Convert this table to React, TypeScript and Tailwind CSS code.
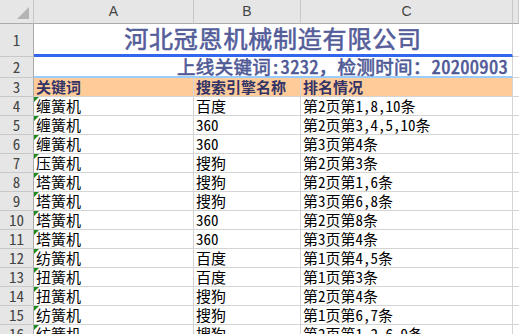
const FONT = '"Noto Sans Mono CJK SC", "Noto Sans CJK SC", sans-serif';

type Row = [string, string, string];

const ROWS: Row[] = [
  ['缠簧机', '百度', '第2页第1,8,10条'],
  ['缠簧机', '360', '第2页第3,4,5,10条'],
  ['缠簧机', '360', '第3页第4条'],
  ['压簧机', '搜狗', '第2页第3条'],
  ['塔簧机', '搜狗', '第2页第1,6条'],
  ['塔簧机', '搜狗', '第3页第6,8条'],
  ['塔簧机', '360', '第2页第8条'],
  ['塔簧机', '360', '第3页第4条'],
  ['纺簧机', '百度', '第1页第4,5条'],
  ['扭簧机', '百度', '第1页第3条'],
  ['扭簧机', '搜狗', '第2页第4条'],
  ['纺簧机', '搜狗', '第1页第6,7条'],
  ['纺簧机', '搜狗', '第2页第1,2,6,9条'],
];

function RowHead({ n, h }: { n: number; h: string }) {
  return (
    <div className={`${h} flex items-center justify-center border-r border-b border-r-[#ababab] border-b-[#c8c8c8] bg-[#e6e6e6] text-[15px] text-[#444]`}>
      {n}
    </div>
  );
}

function Cell({ children, flag }: { children: React.ReactNode; flag?: boolean }) {
  return (
    <div className="relative flex h-[19px] items-end overflow-visible whitespace-nowrap border-r border-b border-[#d4d4d4] pl-[2px] text-[15px] leading-[18px] text-black">
      {flag ? <span className="absolute left-0 top-0 h-0 w-0 border-t-[5px] border-r-[5px] border-t-[#1c8a1c] border-r-transparent" /> : null}
      {children}
    </div>
  );
}

export default function App() {
  return (
    <div className="h-[334px] w-[519px] overflow-hidden bg-white" style={{ fontFamily: FONT }}>
      <div className="grid grid-cols-[34px_160px_107px_212px_1fr]">
        {/* column headers */}
        <div className="relative h-[24px] border-r border-b border-r-[#c8c8c8] border-b-[#ababab] bg-[#e6e6e6]">
          <span className="absolute bottom-[4px] right-[4px] h-0 w-0 border-b-[12px] border-l-[12px] border-b-[#b4b4b4] border-l-transparent" />
        </div>
        {['A', 'B', 'C', ''].map((c, i) => (
          <div key={i} className="flex h-[24px] items-center justify-center border-r border-b border-r-[#c8c8c8] border-b-[#ababab] bg-[#e6e6e6] text-[14px] text-[#444]" style={{ fontFamily: '"Liberation Sans", sans-serif' }}>
            {c}
          </div>
        ))}

        {/* row 1 */}
        <RowHead n={1} h="h-[33px]" />
        <div className="col-span-3 flex h-[33px] items-center justify-center border-r border-b-[3px] border-r-[#d4d4d4] border-b-[#3366ee] pb-[2px] text-[24px] font-normal leading-none tracking-[0.8px] text-[#535d9a] [-webkit-text-stroke:0.6px_#535d9a]">
          河北冠恩机械制造有限公司
        </div>
        <div className="h-[33px] border-b border-[#d4d4d4]" />

        {/* row 2 */}
        <RowHead n={2} h="h-[21px]" />
        <div className="col-span-3 flex h-[21px] items-end justify-end border-r border-b-2 border-r-[#d4d4d4] border-b-[#99ccff] pr-[4px] text-[18.5px] font-normal leading-[20px] tracking-[0.3px] text-[#4f5996] [-webkit-text-stroke:0.6px_#4f5996]">
          上线关键词:3232，检测时间：20200903
        </div>
        <div className="h-[21px] border-b border-[#d4d4d4]" />

        {/* row 3 */}
        <RowHead n={3} h="h-[19px]" />
        {['关键词', '搜索引擎名称', '排名情况'].map((t) => (
          <div key={t} className="flex h-[19px] items-end border-r border-b border-[#d4d4d4] bg-[#ffcc99] pl-[2px] text-[15px] font-bold leading-[18px] text-[#333366]">
            {t}
          </div>
        ))}
        <div className="h-[19px] border-b border-[#d4d4d4]" />

        {ROWS.map((r, i) => (
          <div key={i} className="contents">
            <RowHead n={i + 4} h="h-[19px]" />
            <Cell flag>{r[0]}</Cell>
            <Cell>{r[1]}</Cell>
            <Cell>{r[2]}</Cell>
            <div className="h-[19px] border-b border-[#d4d4d4]" />
          </div>
        ))}
      </div>
    </div>
  );
}
